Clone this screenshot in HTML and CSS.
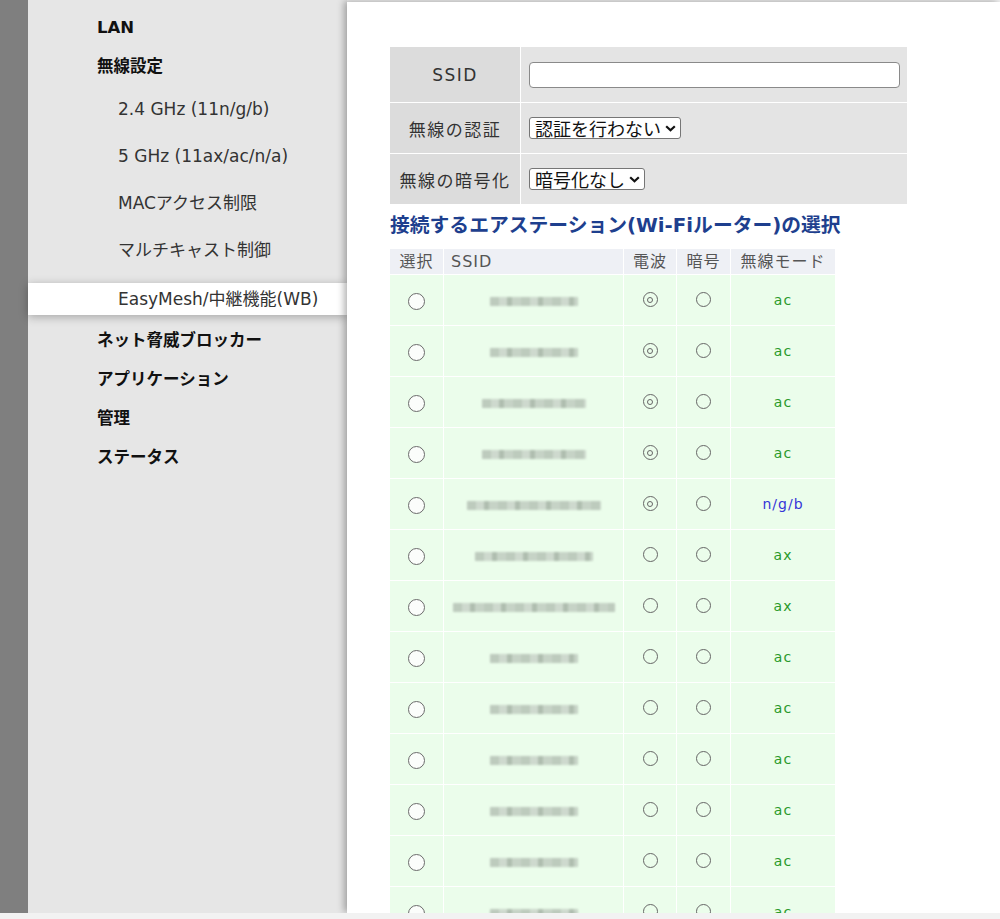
FILE: index.html
```html
<!DOCTYPE html>
<html lang="ja">
<head>
<meta charset="utf-8">
<title>EasyMesh/中継機能(WB)</title>
<link rel="stylesheet" href="styles.css">
</head>
<body>
<div class="frame">
  <div class="rail"></div>
  <nav class="side">
    <div class="nav-top">LAN</div>
    <div class="nav-top">無線設定</div>
    <div class="nav-sub">2.4 GHz (11n/g/b)</div>
    <div class="nav-sub">5 GHz (11ax/ac/n/a)</div>
    <div class="nav-sub">MACアクセス制限</div>
    <div class="nav-sub">マルチキャスト制御</div>
    <div class="nav-sub active">EasyMesh/中継機能(WB)</div>
    <div class="nav-top">ネット脅威ブロッカー</div>
    <div class="nav-top">アプリケーション</div>
    <div class="nav-top">管理</div>
    <div class="nav-top">ステータス</div>
  </nav>
  <main class="main">
    <div class="form">
      <div class="label">SSID</div>
      <div class="value"><input class="text" type="text"></div>
      <div class="label">無線の認証</div>
      <div class="value">
        <span class="sel"><select><option>認証を行わない</option></select><svg class="chev" width="11" height="7" viewBox="0 0 11 7"><path d="M1.2 1.2 L5.5 5.3 L9.8 1.2" fill="none" stroke="#111" stroke-width="2.2"/></svg></span>
      </div>
      <div class="label">無線の暗号化</div>
      <div class="value">
        <span class="sel"><select><option>暗号化なし</option></select><svg class="chev" width="11" height="7" viewBox="0 0 11 7"><path d="M1.2 1.2 L5.5 5.3 L9.8 1.2" fill="none" stroke="#111" stroke-width="2.2"/></svg></span>
      </div>
    </div>

    <h2 class="heading">接続するエアステーション(Wi-Fiルーター)の選択</h2>

    <table class="list">
      <colgroup>
        <col class="c-sel"><col class="c-ssid"><col class="c-sig"><col class="c-enc"><col class="c-mode">
      </colgroup>
      <thead>
        <tr><th>選択</th><th class="left">SSID</th><th>電波</th><th>暗号</th><th>無線モード</th></tr>
      </thead>
      <tbody>
        <tr><td><input type="radio" name="ap" class="radio"></td><td><span class="blur w1"></span></td><td><span class="sig strong"></span></td><td><span class="sig"></span></td><td class="mode ac">ac</td></tr>
        <tr><td><input type="radio" name="ap" class="radio"></td><td><span class="blur w1"></span></td><td><span class="sig strong"></span></td><td><span class="sig"></span></td><td class="mode ac">ac</td></tr>
        <tr><td><input type="radio" name="ap" class="radio"></td><td><span class="blur w2"></span></td><td><span class="sig strong"></span></td><td><span class="sig"></span></td><td class="mode ac">ac</td></tr>
        <tr><td><input type="radio" name="ap" class="radio"></td><td><span class="blur w2"></span></td><td><span class="sig strong"></span></td><td><span class="sig"></span></td><td class="mode ac">ac</td></tr>
        <tr><td><input type="radio" name="ap" class="radio"></td><td><span class="blur w4"></span></td><td><span class="sig strong"></span></td><td><span class="sig"></span></td><td class="mode ngb">n/g/b</td></tr>
        <tr><td><input type="radio" name="ap" class="radio"></td><td><span class="blur w3"></span></td><td><span class="sig"></span></td><td><span class="sig"></span></td><td class="mode ac">ax</td></tr>
        <tr><td><input type="radio" name="ap" class="radio"></td><td><span class="blur w5"></span></td><td><span class="sig"></span></td><td><span class="sig"></span></td><td class="mode ac">ax</td></tr>
        <tr><td><input type="radio" name="ap" class="radio"></td><td><span class="blur w1"></span></td><td><span class="sig"></span></td><td><span class="sig"></span></td><td class="mode ac">ac</td></tr>
        <tr><td><input type="radio" name="ap" class="radio"></td><td><span class="blur w1"></span></td><td><span class="sig"></span></td><td><span class="sig"></span></td><td class="mode ac">ac</td></tr>
        <tr><td><input type="radio" name="ap" class="radio"></td><td><span class="blur w1"></span></td><td><span class="sig"></span></td><td><span class="sig"></span></td><td class="mode ac">ac</td></tr>
        <tr><td><input type="radio" name="ap" class="radio"></td><td><span class="blur w1"></span></td><td><span class="sig"></span></td><td><span class="sig"></span></td><td class="mode ac">ac</td></tr>
        <tr><td><input type="radio" name="ap" class="radio"></td><td><span class="blur w1"></span></td><td><span class="sig"></span></td><td><span class="sig"></span></td><td class="mode ac">ac</td></tr>
        <tr><td><input type="radio" name="ap" class="radio"></td><td><span class="blur w1"></span></td><td><span class="sig"></span></td><td><span class="sig"></span></td><td class="mode ac">ac</td></tr>
      </tbody>
    </table>
  </main>
</div>
</body>
</html>
```

FILE: styles.css
```css
html, body {
  margin: 0;
  padding: 0;
  height: 100%;
  overflow: hidden;
}
body {
  background: #f2f2f2;
  font-family: "DejaVu Sans", "Noto Sans CJK JP", sans-serif;
  color: #222;
}
.frame {
  display: flex;
  height: 913px;
  overflow: hidden;
}
.rail {
  width: 28px;
  flex: none;
  background: #7f7f7f;
}
.side {
  width: 319px;
  flex: none;
  background: #e6e6e6;
  padding-top: 8px;
  box-sizing: border-box;
}
.nav-top {
  height: 39px;
  line-height: 40px;
  padding-left: 69px;
  font-size: 16.5px;
  font-weight: bold;
  color: #111;
}
.nav-sub {
  height: 47px;
  line-height: 47px;
  padding-left: 90px;
  font-size: 17px;
  color: #333;
}
.nav-sub.active {
  height: 32px;
  line-height: 32px;
  margin: 9px 0 6px;
  background: #fff;
  box-shadow: 0 2px 9px rgba(0, 0, 0, 0.28);
  position: relative;
}
.main {
  flex: 1;
  background: #fff;
  margin-top: 2px;
  padding: 45px 0 0 43px;
  box-shadow: -3px -1px 7px rgba(0, 0, 0, 0.3);
  position: relative;
  z-index: 1;
  overflow: hidden;
}
.form {
  display: grid;
  grid-template-columns: 130px 386px;
  grid-template-rows: 55px 50px 50px;
  gap: 1px;
  width: 517px;
}
.label {
  background: #dcdcdc;
  display: flex;
  align-items: center;
  justify-content: center;
  font-size: 17px;
  letter-spacing: 1.5px;
  color: #333;
}
.value {
  background: #e4e4e4;
  display: flex;
  align-items: center;
  padding-left: 8px;
}
.text {
  width: 371px;
  height: 26px;
  box-sizing: border-box;
  border: 1px solid #8a8a8a;
  border-radius: 4px;
  background: #fff;
  margin: 0;
}
.sel {
  position: relative;
  display: inline-flex;
  align-items: center;
  height: 22px;
  box-sizing: border-box;
  border: 1px solid #767676;
  border-radius: 3px;
  background: #fff;
}
.sel select {
  appearance: none;
  -webkit-appearance: none;
  border: 0;
  background: transparent;
  font-family: "Noto Sans CJK JP", sans-serif;
  font-size: 18px;
  color: #111;
  padding: 0 19px 0 5px;
  height: 20px;
  line-height: 20px;
  margin: 0;
  outline: none;
}
.chev {
  position: absolute;
  right: 4px;
  top: 7px;
  pointer-events: none;
}
.heading {
  margin: 8px 0 8px;
  line-height: 28px;
  font-size: 19.8px;
  font-weight: bold;
  color: #1e3f8e;
}
.list {
  border-collapse: separate;
  border-spacing: 1px;
  margin-left: -1px;
  background: #fff;
  table-layout: fixed;
  width: 446px;
}
.c-sel { width: 53px; }
.c-ssid { width: 179px; }
.c-sig { width: 52px; }
.c-enc { width: 53px; }
.c-mode { width: 104px; }
.list th {
  height: 25px;
  padding: 0;
  background: #eef0f5;
  font-weight: normal;
  font-size: 16px;
  letter-spacing: 1px;
  color: #555;
  text-align: center;
  line-height: 25px;
}
.list th.left {
  text-align: left;
  padding-left: 7px;
}
.list td {
  height: 50px;
  padding: 0;
  background: #ebfdeb;
  text-align: center;
  vertical-align: middle;
}
.radio {
  appearance: none;
  -webkit-appearance: none;
  width: 17px;
  height: 17px;
  margin: 2px 0 0;
  border: 1.5px solid #6b6b6b;
  border-radius: 50%;
  background: #fbfdfb;
  box-sizing: border-box;
  vertical-align: middle;
}
.sig {
  display: inline-block;
  width: 15px;
  height: 15px;
  box-sizing: border-box;
  border: 1px solid #666;
  border-radius: 50%;
  position: relative;
  vertical-align: middle;
  margin-top: -3px;
}
.sig.strong::after {
  content: "";
  position: absolute;
  left: 3.5px;
  top: 3.5px;
  width: 6px;
  height: 6px;
  box-sizing: border-box;
  border: 1px solid #666;
  border-radius: 50%;
}
.blur {
  display: inline-block;
  height: 9px;
  vertical-align: middle;
  background: repeating-linear-gradient(90deg, #b9c6b9 0 9px, #cbd6cb 9px 17px, #a9b7a9 17px 22px, #c3cfc3 22px 31px);
  filter: blur(1px);
  opacity: 0.9;
}
.w1 { width: 88px; }
.w2 { width: 104px; }
.w3 { width: 118px; }
.w4 { width: 134px; }
.w5 { width: 162px; }
.mode {
  font-size: 14px;
  letter-spacing: 1px;
}
.mode.ac { color: #2a9a2a; }
.mode.ngb { color: #3535d8; }
```
